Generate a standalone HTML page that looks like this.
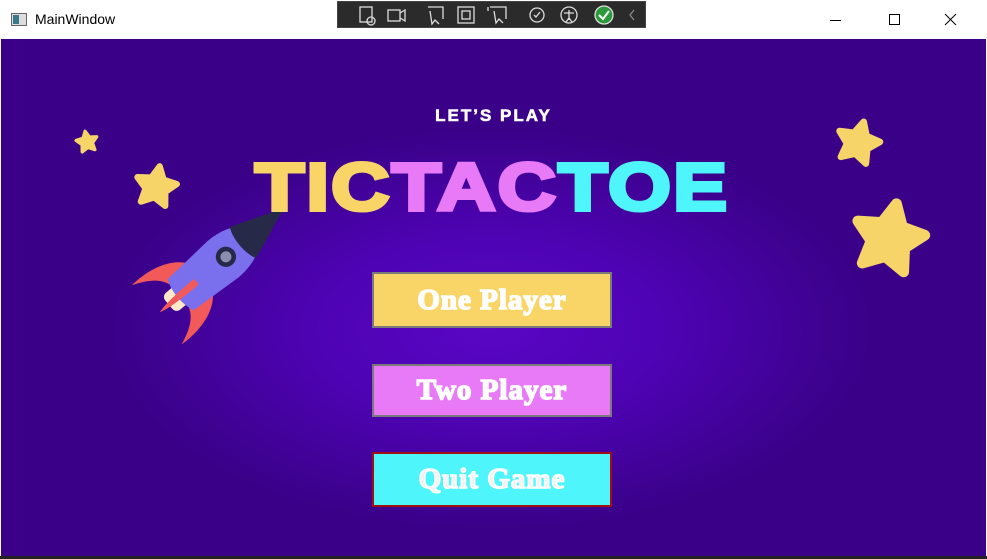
<!DOCTYPE html>
<html><head><meta charset="utf-8"><style>
*{margin:0;padding:0;box-sizing:border-box}
body{width:987px;height:559px;overflow:hidden;background:#fff;font-family:"Liberation Sans",sans-serif;position:relative}
.tb{position:absolute;left:0;top:0;width:987px;height:39px;background:#fff}
.tb .t{position:absolute;left:35px;top:11px;font-size:14px;color:#000}
.main{position:absolute;left:1px;top:39px;width:985px;height:517px;background:radial-gradient(ellipse 380px 200px at 490px 290px,#5a06c4 0%,#4e03b4 45%,#43029c 75%,#3a0188 100%)}
.bottom{position:absolute;left:0;top:556px;width:987px;height:3px;background:#222}
.dev{position:absolute;left:337px;top:1px;width:309px;height:27px;background:#2b2b2b;border:1px solid #444}
.lets{position:absolute;left:0;width:985px;top:67px;text-align:center;color:#fff;font-weight:bold;font-size:17px;letter-spacing:2px;-webkit-text-stroke:0.6px #fff}
.title{position:absolute;left:254px;top:109px;font-weight:bold;font-size:67px;letter-spacing:2px;transform:scaleX(1.2);transform-origin:left top;-webkit-text-stroke:4px currentColor;white-space:nowrap;line-height:80px}
.btn{position:absolute;left:371px;width:240px;border:2px solid #7a7a7a;color:#fff;font-family:"Liberation Serif",serif;font-weight:bold;font-size:29px;text-align:center;-webkit-text-stroke:1.6px #fff;letter-spacing:1px}
</style></head><body>
<div class="tb">
<svg style="position:absolute;left:11px;top:13px" width="16" height="13"><rect x="0.5" y="0.5" width="15" height="12" fill="#ddd" stroke="#666"/><rect x="2" y="2" width="6" height="9" fill="#3a7a8a"/></svg>
<div class="t">MainWindow</div>
<div class="dev">
<svg width="309" height="27" fill="none" stroke="#ddd" stroke-width="1.3">
<rect x="22" y="5" width="12" height="15"/><circle cx="33" cy="19" r="4"/>
<rect x="50" y="8" width="12" height="11"/><path d="M62 11l5-3v11l-5-3"/>
<path d="M90 5h15v12M92 9l2 13 3-4 4 4" />
<rect x="120" y="5" width="16" height="16"/><rect x="124" y="9" width="8" height="8"/>
<path d="M152 5h16v12M156 9l2 12 3-4 4 4M150 5v4"/>
<circle cx="199" cy="13" r="7"/><path d="M196 13l2 2 4-5"/>
<circle cx="231" cy="13" r="8"/><path d="M231 8v10M226 11h10M228 20l3-4 3 4"/>
<circle cx="266" cy="13" r="9" fill="#2a9a3a" stroke="#ddd"/><path d="M261 13l4 4 6-8" stroke="#fff" stroke-width="2"/>
<path d="M296 8l-4 5 4 5" stroke="#888"/>
</svg></div>
<svg style="position:absolute;left:830px;top:12px" width="140" height="16" stroke="#000" stroke-width="1" fill="none"><path d="M0 8.5h11"/><rect x="59.5" y="2.5" width="10" height="10"/><path d="M115 2l11 11M126 2l-11 11"/></svg>
</div>
<div class="main">
<svg style="position:absolute;left:0;top:0" width="985" height="517">
<defs><path id="st" d="M0,-1L0.294,-0.405L0.951,-0.309L0.476,0.155L0.588,0.809L0,0.5L-0.588,0.809L-0.476,0.155L-0.951,-0.309L-0.294,-0.405Z"/></defs>
<g fill="#f7d468" stroke="#f7d468" stroke-linejoin="round">
<use href="#st" transform="translate(86,103) scale(11) rotate(-10)" stroke-width="0.3"/>
<use href="#st" transform="translate(155,148) scale(21) rotate(10)" stroke-width="0.3"/>
<use href="#st" transform="translate(857,104) scale(22) rotate(15)" stroke-width="0.3"/>
<use href="#st" transform="translate(888,200) scale(36) rotate(12)" stroke-width="0.3"/>
</g>
<g transform="translate(208,232) rotate(50) scale(0.92)">
<path d="M-18 10 C-38 22 -44 50 -42 74 C-36 58 -28 46 -16 42Z" fill="#f25a5a"/>
<path d="M18 10 C38 22 44 50 42 74 C36 58 28 46 16 42Z" fill="#f25a5a"/>
<rect x="-12" y="35" width="24" height="22" rx="6" fill="#ffe9c8"/>
<path d="M-26 -20 C-26 -45 -15 -65 0 -70 C15 -65 26 -45 26 -20 L22 40 C10 46 -10 46 -22 40Z" fill="#7a70ee"/>
<path d="M-22 -48 C-15 -70 -5 -90 0 -108 C5 -90 15 -70 22 -48 C10 -42 -10 -42 -22 -48Z" fill="#262a48"/>
<circle cx="0" cy="-24" r="11" fill="#262a48"/><circle cx="0" cy="-24" r="6" fill="#8a8fb0"/>
<path d="M-4 18 C-4 45 -3 60 0 70 C3 60 4 45 4 18Z" fill="#f25a5a"/>
</g>
</svg>
<div class="lets">LET’S PLAY</div>
<div class="title"><span style="color:#f9d567">TIC</span><span style="color:#e87af7">TAC</span><span style="color:#4ef6fb">TOE</span></div>
<div class="btn" style="top:233px;height:56px;line-height:52px;background:#f9d567">One Player</div>
<div class="btn" style="top:325px;height:53px;line-height:49px;background:#e87af7">Two Player</div>
<div class="btn" style="top:413px;height:55px;line-height:51px;background:#4ef6fb;border-color:#a01010;color:#f2f2f2">Quit Game</div>
</div>
<div class="bottom"></div>
</body></html>
